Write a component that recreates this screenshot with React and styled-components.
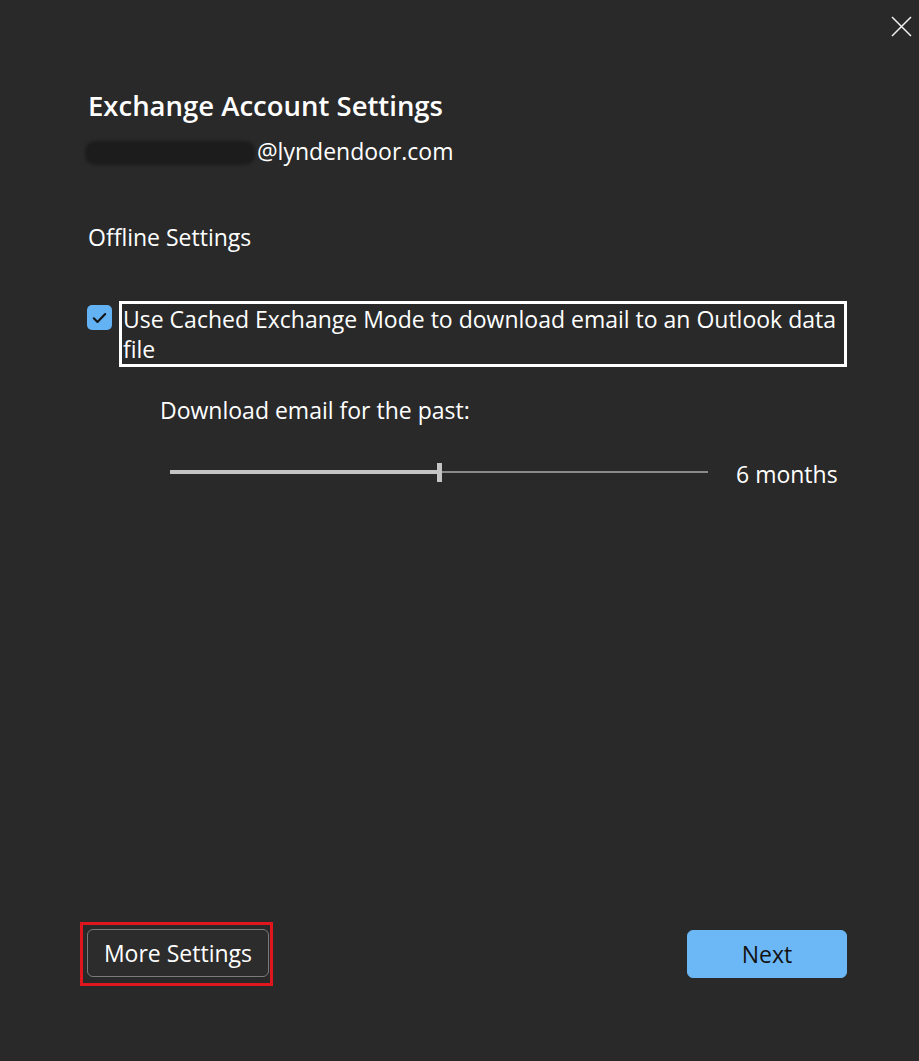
import React from "react";
import styled, { createGlobalStyle } from "styled-components";

const Global = createGlobalStyle`
  html, body { margin: 0; padding: 0; background: #292929; }
  body { font-family: "Open Sans", "Noto Sans", "Liberation Sans", sans-serif; color: #ffffff; }
  * { box-sizing: border-box; }
`;

const Dialog = styled.div`
  width: 919px;
  height: 1061px;
  background: #292929;
  display: flex;
  flex-direction: column;
  border-radius: 8px;
  overflow: hidden;
`;

const TopBar = styled.div`
  display: flex;
  justify-content: flex-end;
  padding: 16px 7px 0 0;
`;

const CloseButton = styled.button`
  width: 21px;
  height: 21px;
  padding: 0;
  border: none;
  background: transparent;
  cursor: pointer;
  display: flex;
  align-items: center;
  justify-content: center;
`;

const Content = styled.div`
  flex: 1;
  display: flex;
  flex-direction: column;
  padding: 0 72px 75px 88px;
`;

const Title = styled.h1`
  margin: 52px 0 0 0;
  font-size: 27.5px;
  line-height: 34px;
  font-weight: 600;
  letter-spacing: 0;
`;

const EmailRow = styled.div`
  display: flex;
  align-items: center;
  margin-top: 13px;
  margin-left: -3px;
  font-size: 23px;
  line-height: 30px;
`;

const Redacted = styled.span`
  display: inline-block;
  width: 170px;
  height: 24px;
  margin-right: 2px;
  margin-top: 4px;
  border-radius: 10px;
  background: #1c1c1c;
  filter: blur(1.5px);
`;

const Section = styled.div`
  margin-top: 56px;
  font-size: 23px;
  line-height: 30px;
`;

const CheckRow = styled.div`
  display: flex;
  align-items: flex-start;
  gap: 7px;
  margin-top: 49px;
  margin-left: -1px;
`;

const CheckBox = styled.span`
  flex: none;
  width: 25px;
  height: 25px;
  margin-top: 4px;
  border-radius: 5px;
  background: #63b2f4;
  display: flex;
  align-items: center;
  justify-content: center;
`;

const FocusLabel = styled.label`
  flex: 1;
  border: 3px solid #ffffff;
  padding: 0 4px 0 1px;
  font-size: 23px;
  line-height: 30px;
`;

const SubLabel = styled.div`
  margin-top: 28px;
  margin-left: 72px;
  font-size: 23px;
  line-height: 30px;
`;

const SliderRow = styled.div`
  display: flex;
  align-items: center;
  gap: 28px;
  margin-top: 32px;
  margin-left: 82px;
  height: 30px;
`;

const Track = styled.div`
  width: 538px;
  height: 20px;
  display: flex;
  align-items: center;
`;

const Filled = styled.div`
  height: 4px;
  background: #c4c4c4;
`;

const Rest = styled.div`
  flex: 1;
  height: 2px;
  background: #8a8a8a;
`;

const Thumb = styled.div`
  width: 5px;
  height: 19px;
  background: #c4c4c4;
  flex: none;
`;

const SliderValue = styled.span`
  font-size: 23px;
  line-height: 30px;
  margin-top: 4px;
`;

const Footer = styled.div`
  margin-top: auto;
  display: flex;
  justify-content: space-between;
  align-items: center;
`;

const Annotation = styled.div`
  margin-left: -8px;
  border: 3px solid #e0161e;
  padding: 4px 1px 6px 4px;
`;

const Button = styled.button`
  height: 48px;
  border-radius: 6px;
  font-family: inherit;
  font-size: 23px;
  cursor: pointer;
  border: 1.5px solid ${(p) => (p.$primary ? "#6cb8f6" : "#7b7b7b")};
  background: ${(p) => (p.$primary ? "#6cb8f6" : "#2c2c2c")};
  color: ${(p) => (p.$primary ? "#121212" : "#ffffff")};
  width: ${(p) => p.$w}px;
`;

export default function App() {
  const pct = 0.5;
  return (
    <Dialog>
      <Global />
      <TopBar>
        <CloseButton aria-label="Close">
          <svg width="21" height="21" viewBox="0 0 21 21">
            <path d="M1 1 L20 20 M20 1 L1 20" stroke="#f2f2f2" strokeWidth="1.5" />
          </svg>
        </CloseButton>
      </TopBar>
      <Content>
        <Title>Exchange Account Settings</Title>
        <EmailRow>
          <Redacted />
          @lyndendoor.com
        </EmailRow>
        <Section>Offline Settings</Section>
        <CheckRow>
          <CheckBox>
            <svg width="15" height="12" viewBox="0 0 15 12">
              <path d="M1.8 6.3 L5.5 10 L13.2 2" fill="none" stroke="#141414" strokeWidth="2.1" strokeLinecap="round" strokeLinejoin="round" />
            </svg>
          </CheckBox>
          <FocusLabel>
            Use Cached Exchange Mode to download email to an Outlook data file
          </FocusLabel>
        </CheckRow>
        <SubLabel>Download email for the past:</SubLabel>
        <SliderRow>
          <Track>
            <Filled style={{ width: `${pct * 538 - 2}px` }} />
            <Thumb />
            <Rest />
          </Track>
          <SliderValue>6 months</SliderValue>
        </SliderRow>
        <Footer>
          <Annotation>
            <Button $w={182}>More Settings</Button>
          </Annotation>
          <Button $primary $w={160}>Next</Button>
        </Footer>
      </Content>
    </Dialog>
  );
}
